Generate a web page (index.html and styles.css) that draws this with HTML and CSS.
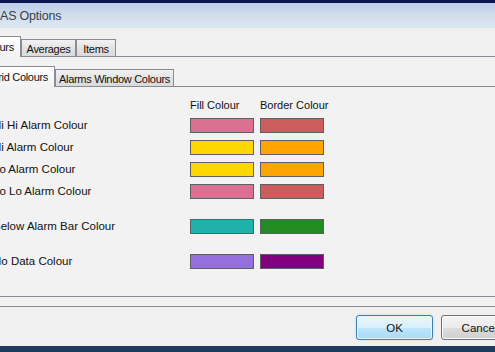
FILE: index.html
```html
<!DOCTYPE html>
<html>
<head>
<meta charset="utf-8">
<link rel="stylesheet" href="styles.css">
</head>
<body>
<div class="topbar"></div>
<div class="titlebar"><span class="title">AS Options</span></div>
<div class="client">
  <div class="strip outer-strip">
    <div class="tab sel w-colours">Colours</div>
    <div class="tab w-avg">Averages</div>
    <div class="tab w-items">Items</div>
  </div>
  <div class="panel outer-panel">
    <div class="strip inner-strip">
      <div class="tab sel w-grid">Grid Colours</div>
      <div class="tab w-alarms">Alarms Window Colours</div>
    </div>
    <div class="panel inner-panel">
      <div class="row head">
        <span></span><span class="colhead">Fill Colour</span><span class="colhead">Border Colour</span>
      </div>
      <div class="row">
        <span class="label">Hi Hi Alarm Colour</span>
        <span class="sw pink"></span><span class="sw indian"></span>
      </div>
      <div class="row">
        <span class="label">Hi Alarm Colour</span>
        <span class="sw gold"></span><span class="sw orange"></span>
      </div>
      <div class="row">
        <span class="label">Lo Alarm Colour</span>
        <span class="sw gold"></span><span class="sw orange"></span>
      </div>
      <div class="row">
        <span class="label">Lo Lo Alarm Colour</span>
        <span class="sw pink"></span><span class="sw indian"></span>
      </div>
      <div class="row gap1">
        <span class="label">Below Alarm Bar Colour</span>
        <span class="sw teal"></span><span class="sw forest"></span>
      </div>
      <div class="row gap2">
        <span class="label">No Data Colour</span>
        <span class="sw mpurple"></span><span class="sw purple"></span>
      </div>
    </div>
  </div>
  <div class="buttons">
    <button class="btn ok">OK</button>
    <button class="btn">Cancel</button>
  </div>
</div>
<div class="bottombar"></div>
</body>
</html>
```
FILE: styles.css
```css
html, body {
  margin: 0;
  padding: 0;
}
body {
  width: 495px;
  height: 352px;
  overflow: hidden;
  background: #f0f0f0;
  font-family: "Liberation Sans", Arial, sans-serif;
  font-size: 11px;
  color: #000;
  position: relative;
}
.topbar {
  height: 3px;
  background: #0b154f;
}
.titlebar {
  height: 25px;
  background: linear-gradient(#bccde6, #d3e0ee 60%, #dde7f2);
  display: flex;
  align-items: center;
}
.title {
  font-size: 12.5px;
  letter-spacing: -0.2px;
  color: #3a3f48;
  margin-left: 0;
  padding-top: 1px;
}
.client {
  margin-left: -21px;
  width: 640px;
  padding-top: 8px;
  background: #f0f0f0;
}
.strip {
  display: flex;
  align-items: flex-end;
  height: 20px;
  position: relative;
  z-index: 1;
}
.tab {
  box-sizing: border-box;
  height: 17px;
  border: 1px solid #898c95;
  border-bottom: none;
  background: linear-gradient(#f2f2f2, #e3e3e3 50%, #dadada);
  display: flex;
  align-items: center;
  justify-content: center;
  white-space: nowrap;
  padding-top: 1px;
  letter-spacing: -0.3px;
  color: #111;
}
.tab.sel {
  height: 21px;
  margin-bottom: -1px;
  background: linear-gradient(#ffffff, #f7f7f7 60%, #f2f2f2);
  padding-top: 0;
  margin-left: -2px;
}
.w-colours { width: 44px; padding-right: 6px; }
.w-avg { width: 55px; }
.w-items { width: 40px; }
.w-grid { width: 68px; padding-right: 4px; }
.w-alarms { width: 119px; }
.panel {
  box-sizing: border-box;
  border: 1px solid #898c95;
  background: #f2f2f2;
}
.outer-panel {
  padding: 9px 9px 9px 9px;
  border-right: none;
}
.inner-panel {
  height: 211px;
  padding: 9px 0 0 3px;
  border-right: none;
}
.row {
  display: grid;
  grid-template-columns: 191px 64px 64px;
  column-gap: 6px;
  align-items: center;
  height: 22px;
}
.row.head {
  height: 18px;
}
.row.gap1 { margin-top: 13px; }
.row.gap2 { margin-top: 13px; }
.label {
  white-space: nowrap;
  color: #111;
  font-size: 11.5px;
}
.colhead {
  white-space: nowrap;
  color: #111;
}
.sw {
  box-sizing: border-box;
  height: 15px;
  border: 1px solid #5e5e66;
}
.pink { background: #db7093; }
.indian { background: #cd5c5c; }
.gold { background: #ffd700; }
.orange { background: #ffa500; }
.teal { background: #20b2aa; }
.forest { background: #228b22; }
.mpurple { background: #9370db; }
.purple { background: #800080; }
.buttons {
  display: flex;
  gap: 8px;
  padding-left: 377px;
  margin-top: 8px;
}
.btn {
  box-sizing: border-box;
  width: 77px;
  height: 25px;
  font-family: "Liberation Sans", Arial, sans-serif;
  font-size: 11.5px;
  color: #111;
  border: 1px solid #707070;
  border-radius: 3px;
  background: linear-gradient(#f4f4f4, #ebebeb 50%, #dddddd 51%, #cfcfcf);
  box-shadow: inset 0 0 0 1px #fbfbfb;
  padding: 0;
}
.btn.ok {
  border-color: #3c7fb1;
  background: linear-gradient(#eaf6fd, #d9f0fc 50%, #bee6fd 51%, #a7d9f5);
  box-shadow: inset 0 0 0 1px #e6f5fd, 0 0 2px #9fd4f3;
}
.bottombar {
  position: absolute;
  left: 0;
  right: 0;
  bottom: 0;
  height: 6px;
  background: #1f3c5e;
}
```
